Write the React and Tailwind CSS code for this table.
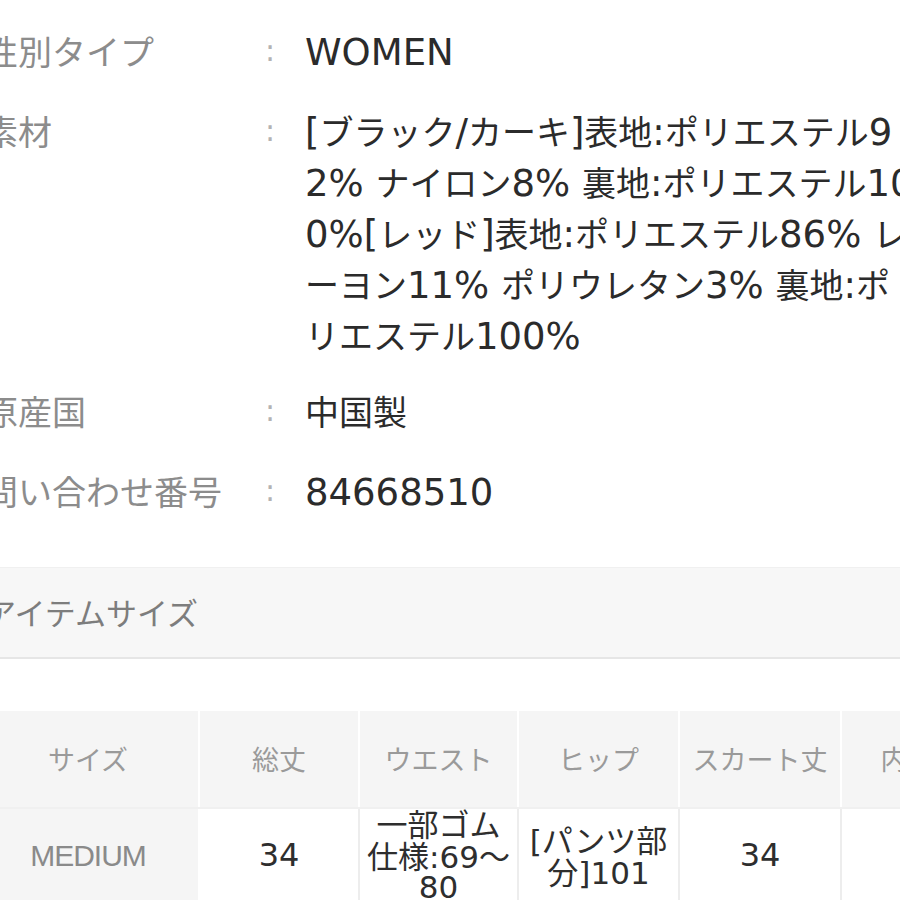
const cjk = "font-['Noto_Sans_CJK_JP',sans-serif]";
const latinValue = "font-['DejaVu_Sans',sans-serif] text-[37px]";
const latinCell = "font-['DejaVu_Sans',sans-serif] text-[31px]";

const specs = [
  { label: "性別タイプ", lines: ["WOMEN"], gap: "mt-[25px]" },
  {
    label: "素材",
    lines: [
      "[ブラック/カーキ]表地:ポリエステル9",
      "2% ナイロン8% 裏地:ポリエステル10",
      "0%[レッド]表地:ポリエステル86% レ",
      "ーヨン11% ポリウレタン3% 裏地:ポ",
      "リエステル100%",
    ],
    gap: "mt-[29px]",
  },
  { label: "原産国", lines: ["中国製"], gap: "mt-[25px]" },
  { label: "問い合わせ番号", lines: ["84668510"], gap: "mt-[29px]" },
];

const headers = ["サイズ", "総丈", "ウエスト", "ヒップ", "スカート丈", "内股丈"];
const widths = ["w-[222px]", "w-[160px]", "w-[159px]", "w-[161px]", "w-[162px]", "w-[160px]"];

// splits a string into ascii / non-ascii runs so latin can get its own face
function Mixed({ text, latin }) {
  const parts = text.split(/([\x20-\x7E]+)/);
  return parts.map((part, i) =>
    i % 2 === 1 ? (
      <span key={i} className={latin}>
        {part}
      </span>
    ) : (
      part
    )
  );
}

export default function App() {
  return (
    <div className="h-[900px] w-[900px] overflow-hidden bg-white">
      <div className={`ml-[-22px] w-[1000px] ${cjk}`}>
        <dl>
          {specs.map((row) => (
            <div key={row.label} className={`flex ${row.gap}`}>
              <dt className="h-[51px] w-[287px] pl-[6px] text-[34px] leading-[51px] text-[#8c8c8c] whitespace-nowrap">
                {row.label}
              </dt>
              <span className="h-[51px] w-[40px] font-['DejaVu_Sans',sans-serif] text-[30px] leading-[51px] text-[#b3b3b3]">
                :
              </span>
              <dd className="flex-1 text-[34px] leading-[51px] text-[#2b2b2b]">
                {row.lines.map((line) => (
                  <div key={line} className="h-[51px] whitespace-nowrap">
                    <Mixed text={line} latin={latinValue} />
                  </div>
                ))}
              </dd>
            </div>
          ))}
        </dl>

        <div className="mt-[51px] flex h-[92px] items-center border-t border-b-2 border-t-[#f0f0f0] border-b-[#e6e6e6] bg-[#f7f7f7] pl-[7px]">
          <span className="text-[31px] text-[#7d7d7d]">アイテムサイズ</span>
        </div>

        <div className="mt-[52px]">
          <div className="flex h-[96px]">
            {headers.map((h, i) => (
              <div
                key={h}
                className={`${widths[i]} flex shrink-0 items-center justify-center border-r-2 border-white bg-[#f5f5f5] text-[27px] text-[#9a9a9a] whitespace-nowrap`}
              >
                {h}
              </div>
            ))}
          </div>
          <div className="flex h-[94px] border-t-2 border-[#f0f0f0]">
            <div className={`${widths[0]} flex shrink-0 items-center justify-center border-r-2 border-white bg-[#f5f5f5] font-['Liberation_Sans',sans-serif] text-[30px] tracking-[-1px] text-[#8a8a8a]`}>
              MEDIUM
            </div>
            <div className={`${widths[1]} flex shrink-0 items-center justify-center border-r-2 border-[#ededed] font-['DejaVu_Sans',sans-serif] text-[32px] text-[#2e2e2e]`}>
              34
            </div>
            <div className={`${widths[2]} flex shrink-0 flex-col items-center justify-center border-r-2 border-[#ededed] text-[31px] leading-[32px] text-[#2e2e2e]`}>
              <span className="h-[32px]">一部ゴム</span>
              <span className="h-[32px] whitespace-nowrap">
                <Mixed text="仕様:69" latin={latinCell} />〜
              </span>
              <span className={`h-[32px] ${latinCell}`}>80</span>
            </div>
            <div className={`${widths[3]} flex shrink-0 flex-col items-center justify-center border-r-2 border-[#ededed] text-[31px] leading-[32px] text-[#2e2e2e]`}>
              <span className="h-[32px] whitespace-nowrap">
                <Mixed text="[パンツ部" latin={latinCell} />
              </span>
              <span className="h-[32px] whitespace-nowrap">
                <Mixed text="分]101" latin={latinCell} />
              </span>
            </div>
            <div className={`${widths[4]} flex shrink-0 items-center justify-center border-r-2 border-[#ededed] font-['DejaVu_Sans',sans-serif] text-[32px] text-[#2e2e2e]`}>
              34
            </div>
            <div className={`${widths[5]} shrink-0 bg-white`} />
          </div>
        </div>
      </div>
    </div>
  );
}
